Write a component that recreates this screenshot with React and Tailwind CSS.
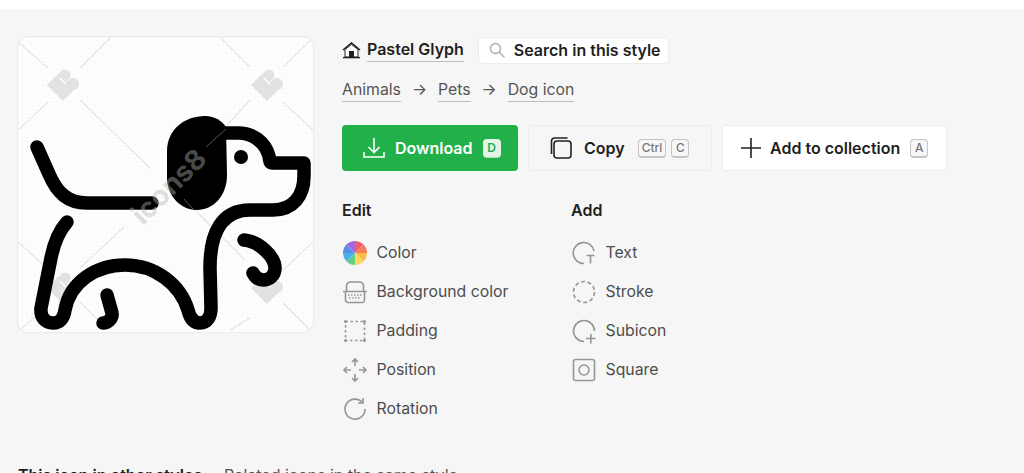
import React from "react";

const Kbd = ({ children, light }) => (
  <span className={light
    ? "flex h-[18px] min-w-[18px] items-center justify-center rounded-[4px] bg-[#e3f5e7] px-1 text-[12px] font-semibold leading-none text-[#21b04a] shadow-[0_1px_0_#b5e4c2]"
    : "flex h-[19px] min-w-[18px] items-center justify-center rounded-[4px] border border-[#c4c4c4] border-b-2 bg-[#f7f7f7] px-[3px] text-[12px] font-medium leading-none text-[#777]"}>
    {children}
  </span>
);

const G = ({ children }) => (
  <svg width="26" height="26" viewBox="0 0 26 26" fill="none" stroke="#969696" strokeWidth="1.6" className="shrink-0">{children}</svg>
);

const wheel = ["#ee5f6b", "#f77a5a", "#fdb94a", "#ffd75c", "#63cf8a", "#4cb0e8", "#5a8de8", "#a765dc"];
const wedge = (i) => {
  const r = 12, c = 13;
  const a0 = ((i * 45 - 90) * Math.PI) / 180, a1 = (((i + 1) * 45 - 90) * Math.PI) / 180;
  return `M${c} ${c}L${c + r * Math.cos(a0)} ${c + r * Math.sin(a0)}A${r} ${r} 0 0 1 ${c + r * Math.cos(a1)} ${c + r * Math.sin(a1)}Z`;
};

const editRows = [
  ["Color", <svg key="c" width="26" height="26" viewBox="0 0 26 26" className="shrink-0">{wheel.map((f, i) => <path key={i} d={wedge(i)} fill={f} />)}</svg>],
  ["Background color", <G key="b"><path d="M4.5 12V7A4 4 0 0 1 8.5 3h9a4 4 0 0 1 4 4V12M1 12.5h24" /><path d="M3.5 13v8a2.5 2.5 0 0 0 2.5 2.5h14a2.5 2.5 0 0 0 2.5-2.5v-8" /><path d="M6 16h14M7 19h12" strokeDasharray="1.5 1.5" /></G>],
  ["Padding", <G key="p"><rect x="3.5" y="3.5" width="19" height="19" strokeDasharray="2.4 2.6" /><g fill="#969696" stroke="none"><circle cx="3.5" cy="3.5" r="1.5" /><circle cx="22.5" cy="3.5" r="1.5" /><circle cx="3.5" cy="22.5" r="1.5" /><circle cx="22.5" cy="22.5" r="1.5" /></g></G>],
  ["Position", <G key="m"><path d="M13 2v7M13 17v7M2 13h7M17 13h7M10 5l3-3 3 3M10 21l3 3 3-3M5 10l-3 3 3 3M21 10l3 3-3 3" /></G>],
  ["Rotation", <G key="r"><path d="M20.5 6.5A10 10 0 1 0 23 13" /><path d="M21 2v5h-5" /></G>],
];
const addRows = [
  ["Text", <G key="t"><path d="M23 11A10.5 10.5 0 1 0 13 23.5" /><path d="M15.5 15.5h8M19.5 15.5v8" /></G>],
  ["Stroke", <G key="s"><circle cx="13" cy="13" r="10.5" strokeDasharray="4 2.6" /></G>],
  ["Subicon", <G key="u"><path d="M23.5 13A10.5 10.5 0 1 0 13 23.5" /><path d="M15 20.5h9.5M19.8 16v9.5" /></G>],
  ["Square", <G key="q"><rect x="2.5" y="2.5" width="21" height="21" rx="2" /><circle cx="13" cy="13" r="5" /></G>],
];

const Row = ({ label, icon }) => (
  <div className="flex h-[39px] items-center gap-[8.5px] whitespace-nowrap text-[15.8px] text-[#4d4d4d]">{icon}<span>{label}</span></div>
);

const Logo = ({ x, y }) => (
  <g transform={`translate(${x} ${y})`}>
    <path d="M-16 0L-4-12L12 4L0 16Z" fill="#e2e2e2" />
    <circle cx="2" cy="-10" r="5.5" fill="#e2e2e2" />
    <circle cx="10" cy="-1" r="6" fill="#e2e2e2" />
    <path d="M-3-7L3-1" stroke="#fff" strokeWidth="1.5" />
  </g>
);

const lines = [
  [18, 42, 48, 68], [80, 68, 111, 37], [18, 130, 48, 102], [80, 100, 150, 168], [220, 37, 250, 67], [283, 67, 313, 38],
  [283, 102, 313, 130], [250, 100, 207, 147], [185, 200, 220, 235], [124, 227, 80, 268], [18, 242, 48, 269], [80, 302, 103, 325],
  [47, 306, 20, 330], [250, 318, 230, 330], [283, 303, 310, 330], [313, 242, 283, 270], [245, 260, 200, 215],
];

const Dog = () => (
  <svg viewBox="18 37 295 295" width="295" height="295" className="absolute inset-0">
    {lines.map((l, i) => <line key={i} x1={l[0]} y1={l[1]} x2={l[2]} y2={l[3]} stroke="#e6e6e6" strokeWidth="1.2" />)}
    <Logo x={63} y={85} /><Logo x={267} y={85} /><Logo x={63} y={288} /><Logo x={267} y={288} />
    <g fill="none" stroke="#000" strokeWidth="13.5" strokeLinecap="round" strokeLinejoin="round">
      <path d="M37 147L49 174C57 193 68 203 87 203L152 203" />
      <path d="M67 222C58 232 54 243 51 258L41 308C40 318 46 323 53 323C60 323 64 318 65 310C70 282 96 265 125 265C155 265 180 284 188 310C190 318 194 323 200 323C207 323 211 317 211 308L210 268C210 232 222 210 250 210L273 210C293 210 304 196 304 176L304 163L272 163C269 163 270 160 269 156C265 142 253 133 238 133L222 133" />
      <path d="M244 240C258 241 275 256 275 268C275 276 269 280 263 280C258 280 255 277 253 273" />
      <path d="M107 295L112 313C113 318 108 323 103 323" />
    </g>
    <path d="M205 116C215 116 222 121 226 127L227 175C227 196 213 210 197 210C179 210 167 194 167 178L167 151C167 130 184 116 205 116Z" fill="#000" />
    <circle cx="241" cy="157" r="7" fill="#000" />
    <line x1="226" y1="129" x2="206" y2="147" stroke="#555" strokeWidth="1" />
    <line x1="184" y1="199" x2="193" y2="209" stroke="#555" strokeWidth="1" />
    <text x="0" y="0" transform="translate(143 226) rotate(-45)" fontFamily="Inter, sans-serif" fontWeight="700" fontSize="28" fill="#b4b4b4" fillOpacity="0.42">icons8</text>
  </svg>
);

export default function App() {
  return (
    <div className="h-screen overflow-hidden bg-[#f6f6f6] font-['Inter',sans-serif] text-[#1f1f1f]">
      <div className="h-[9px] bg-white" />
      <div className="flex gap-[29px] pl-[18px] pt-[28px]">
        <div className="relative h-[295px] w-[295px] shrink-0 overflow-hidden rounded-[10px] bg-white bg-[linear-gradient(#f9f9f9_1px,transparent_1px),linear-gradient(90deg,#f9f9f9_1px,transparent_1px)] bg-[size:4px_4px] shadow-[0_0_0_1px_#ececec]">
          <Dog />
        </div>
        <div className="flex flex-col">
          <div className="flex h-[27px] items-center">
            <svg width="19" height="17" viewBox="0 0 19 17" className="mr-[6px]">
              <path d="M1 8L9.5 1L18 8" fill="none" stroke="#222" strokeWidth="1.6" />
              <path d="M3 7.5V15H16V7.5L9.5 2.5Z" fill="#fff" stroke="#222" strokeWidth="1" />
              <rect x="7" y="9" width="5" height="6" fill="#222" />
              <path d="M1 15.6H18" stroke="#222" strokeWidth="1.4" />
            </svg>
            <span className="mt-[-2px] border-b border-[#bdbdbd] text-[16px] font-semibold leading-[23px]">Pastel Glyph</span>
            <div className="ml-[14px] flex h-[27px] w-[191px] items-center rounded-[4px] border border-[#ececec] bg-white pb-[2px] pl-[10px] text-[16px] font-semibold">
              <svg width="16" height="16" viewBox="0 0 16 16" fill="none" stroke="#aaa" strokeWidth="1.3" className="mr-[9px]">
                <circle cx="6.5" cy="6.5" r="5" /><path d="M10 10L15.5 15.5" />
              </svg>
              Search in this style
            </div>
          </div>
          <div className="mt-[14px] flex h-[23px] items-start text-[15.8px] leading-[23px] text-[#555]">
            <span className="border-b border-[#bdbdbd]">Animals</span>
            <span className="mx-[11px]">→</span>
            <span className="border-b border-[#bdbdbd]">Pets</span>
            <span className="mx-[11px]">→</span>
            <span className="border-b border-[#bdbdbd]">Dog icon</span>
          </div>
          <div className="mt-[24px] flex h-[46px] gap-[10px]">
            <div className="flex w-[176px] items-center rounded-[4px] bg-[#21b04a] pl-[21px] text-[16px] font-semibold text-white">
              <svg width="22" height="22" viewBox="0 0 22 22" fill="none" stroke="#fff" strokeWidth="1.6" className="mr-[10px]">
                <path d="M11 1v14M5.5 10l5.5 5.5L16.5 10M1 15v5h20v-5" />
              </svg>
              Download
              <span className="ml-[10px]"><Kbd light>D</Kbd></span>
            </div>
            <div className="flex w-[184px] items-center rounded-[4px] border border-[#ececec] bg-[#f6f6f6] pl-[21px] text-[16px] font-semibold">
              <svg width="22" height="22" viewBox="0 0 22 22" fill="none" stroke="#222" strokeWidth="1.6" className="mr-[12px]">
                <rect x="4" y="4" width="17" height="17" rx="3" /><path d="M1.5 17V4A3 3 0 0 1 4.5 1h13" />
              </svg>
              Copy
              <span className="ml-[13px] flex gap-[5px]"><Kbd>Ctrl</Kbd><Kbd>C</Kbd></span>
            </div>
            <div className="flex w-[225px] items-center rounded-[4px] border border-[#ececec] bg-white pl-[18px] text-[16px] font-semibold">
              <svg width="20" height="20" viewBox="0 0 20 20" stroke="#222" strokeWidth="1.6" className="mr-[9px]">
                <path d="M10 0V20M0 10H20" />
              </svg>
              Add to collection
              <span className="ml-[10px]"><Kbd>A</Kbd></span>
            </div>
          </div>
          <div className="mt-[27px] flex gap-[63px]">
            <div className="w-[166px]">
              <div className="mb-[11px] h-[24px] text-[16px] font-semibold leading-[24px]">Edit</div>
              {editRows.map(([l, ic]) => <Row key={l} label={l} icon={ic} />)}
            </div>
            <div>
              <div className="mb-[11px] h-[24px] text-[16px] font-semibold leading-[24px]">Add</div>
              {addRows.map(([l, ic]) => <Row key={l} label={l} icon={ic} />)}
            </div>
          </div>
        </div>
      </div>
      <div className="mt-[35px] flex pl-[18px] text-[16px] leading-[24px]">
        <span className="w-[206px] font-semibold">This icon in other styles</span>
        <span className="text-[#555]">Related icons in the same style</span>
      </div>
    </div>
  );
}
